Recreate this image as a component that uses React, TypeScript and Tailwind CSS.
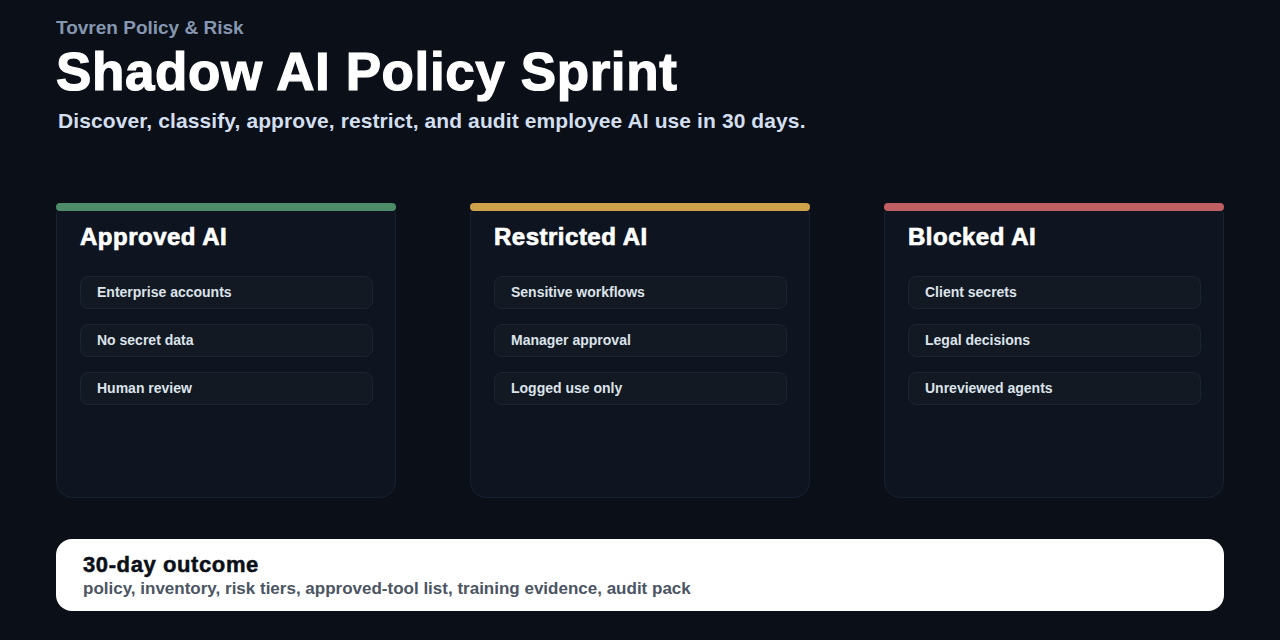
export default function App() {
  const cards = [
    { t: "Approved AI", c: "bg-[#4e8c69]", items: ["Enterprise accounts", "No secret data", "Human review"] },
    { t: "Restricted AI", c: "bg-[#cfa24a]", items: ["Sensitive workflows", "Manager approval", "Logged use only"] },
    { t: "Blocked AI", c: "bg-[#bf5f62]", items: ["Client secrets", "Legal decisions", "Unreviewed agents"] },
  ];
  return (
    <div className="w-[1280px] h-[640px] bg-[#0b0f17] px-[56px] pt-[17px]" style={{ fontFamily: '"Liberation Sans", Arial, sans-serif' }}>
      <div className="text-[19px] font-bold text-[#8597b0] leading-[22px]">Tovren Policy &amp; Risk</div>
      <div className="text-[53px] font-bold text-white leading-[62px] mt-[2px] tracking-[0.6px] [-webkit-text-stroke:1.2px_white]">Shadow AI Policy Sprint</div>
      <div className="text-[21px] font-bold text-[#d3dfee] leading-[26px] mt-[5px] ml-[2px] tracking-[0.1px]">Discover, classify, approve, restrict, and audit employee AI use in 30 days.</div>
      <div className="flex gap-[74px] mt-[69px]">
        {cards.map((k) => (
          <div key={k.t} className="w-[340px] flex flex-col">
            <div className={`h-[8px] rounded-full ${k.c} relative z-10`} />
            <div className="-mt-[3px] h-[290px] rounded-b-2xl rounded-t-md border border-[#182130] bg-[#0e1521] px-[23px] pt-[13px]">
              <div className="text-[24px] font-bold text-white leading-[30px] tracking-[0.5px] [-webkit-text-stroke:0.7px_white]">{k.t}</div>
              <div className="flex flex-col gap-[15px] mt-[24px]">
                {k.items.map((i) => (
                  <div key={i} className="w-[293px] h-[33px] rounded-lg border border-[#1c2431] bg-[#121923] pl-[16px] flex items-center text-[14px] font-bold text-[#dde3ea]">{i}</div>
                ))}
              </div>
            </div>
          </div>
        ))}
      </div>
      <div className="mt-[41px] h-[72px] rounded-2xl bg-white px-[27px] pt-[13px]">
        <div className="text-[22px] font-bold text-[#0b0f17] leading-[26px] tracking-[0.6px] [-webkit-text-stroke:0.5px_#0b0f17]">30-day outcome</div>
        <div className="text-[17px] font-bold text-[#4b5563] leading-[22px]">policy, inventory, risk tiers, approved-tool list, training evidence, audit pack</div>
      </div>
    </div>
  );
}
